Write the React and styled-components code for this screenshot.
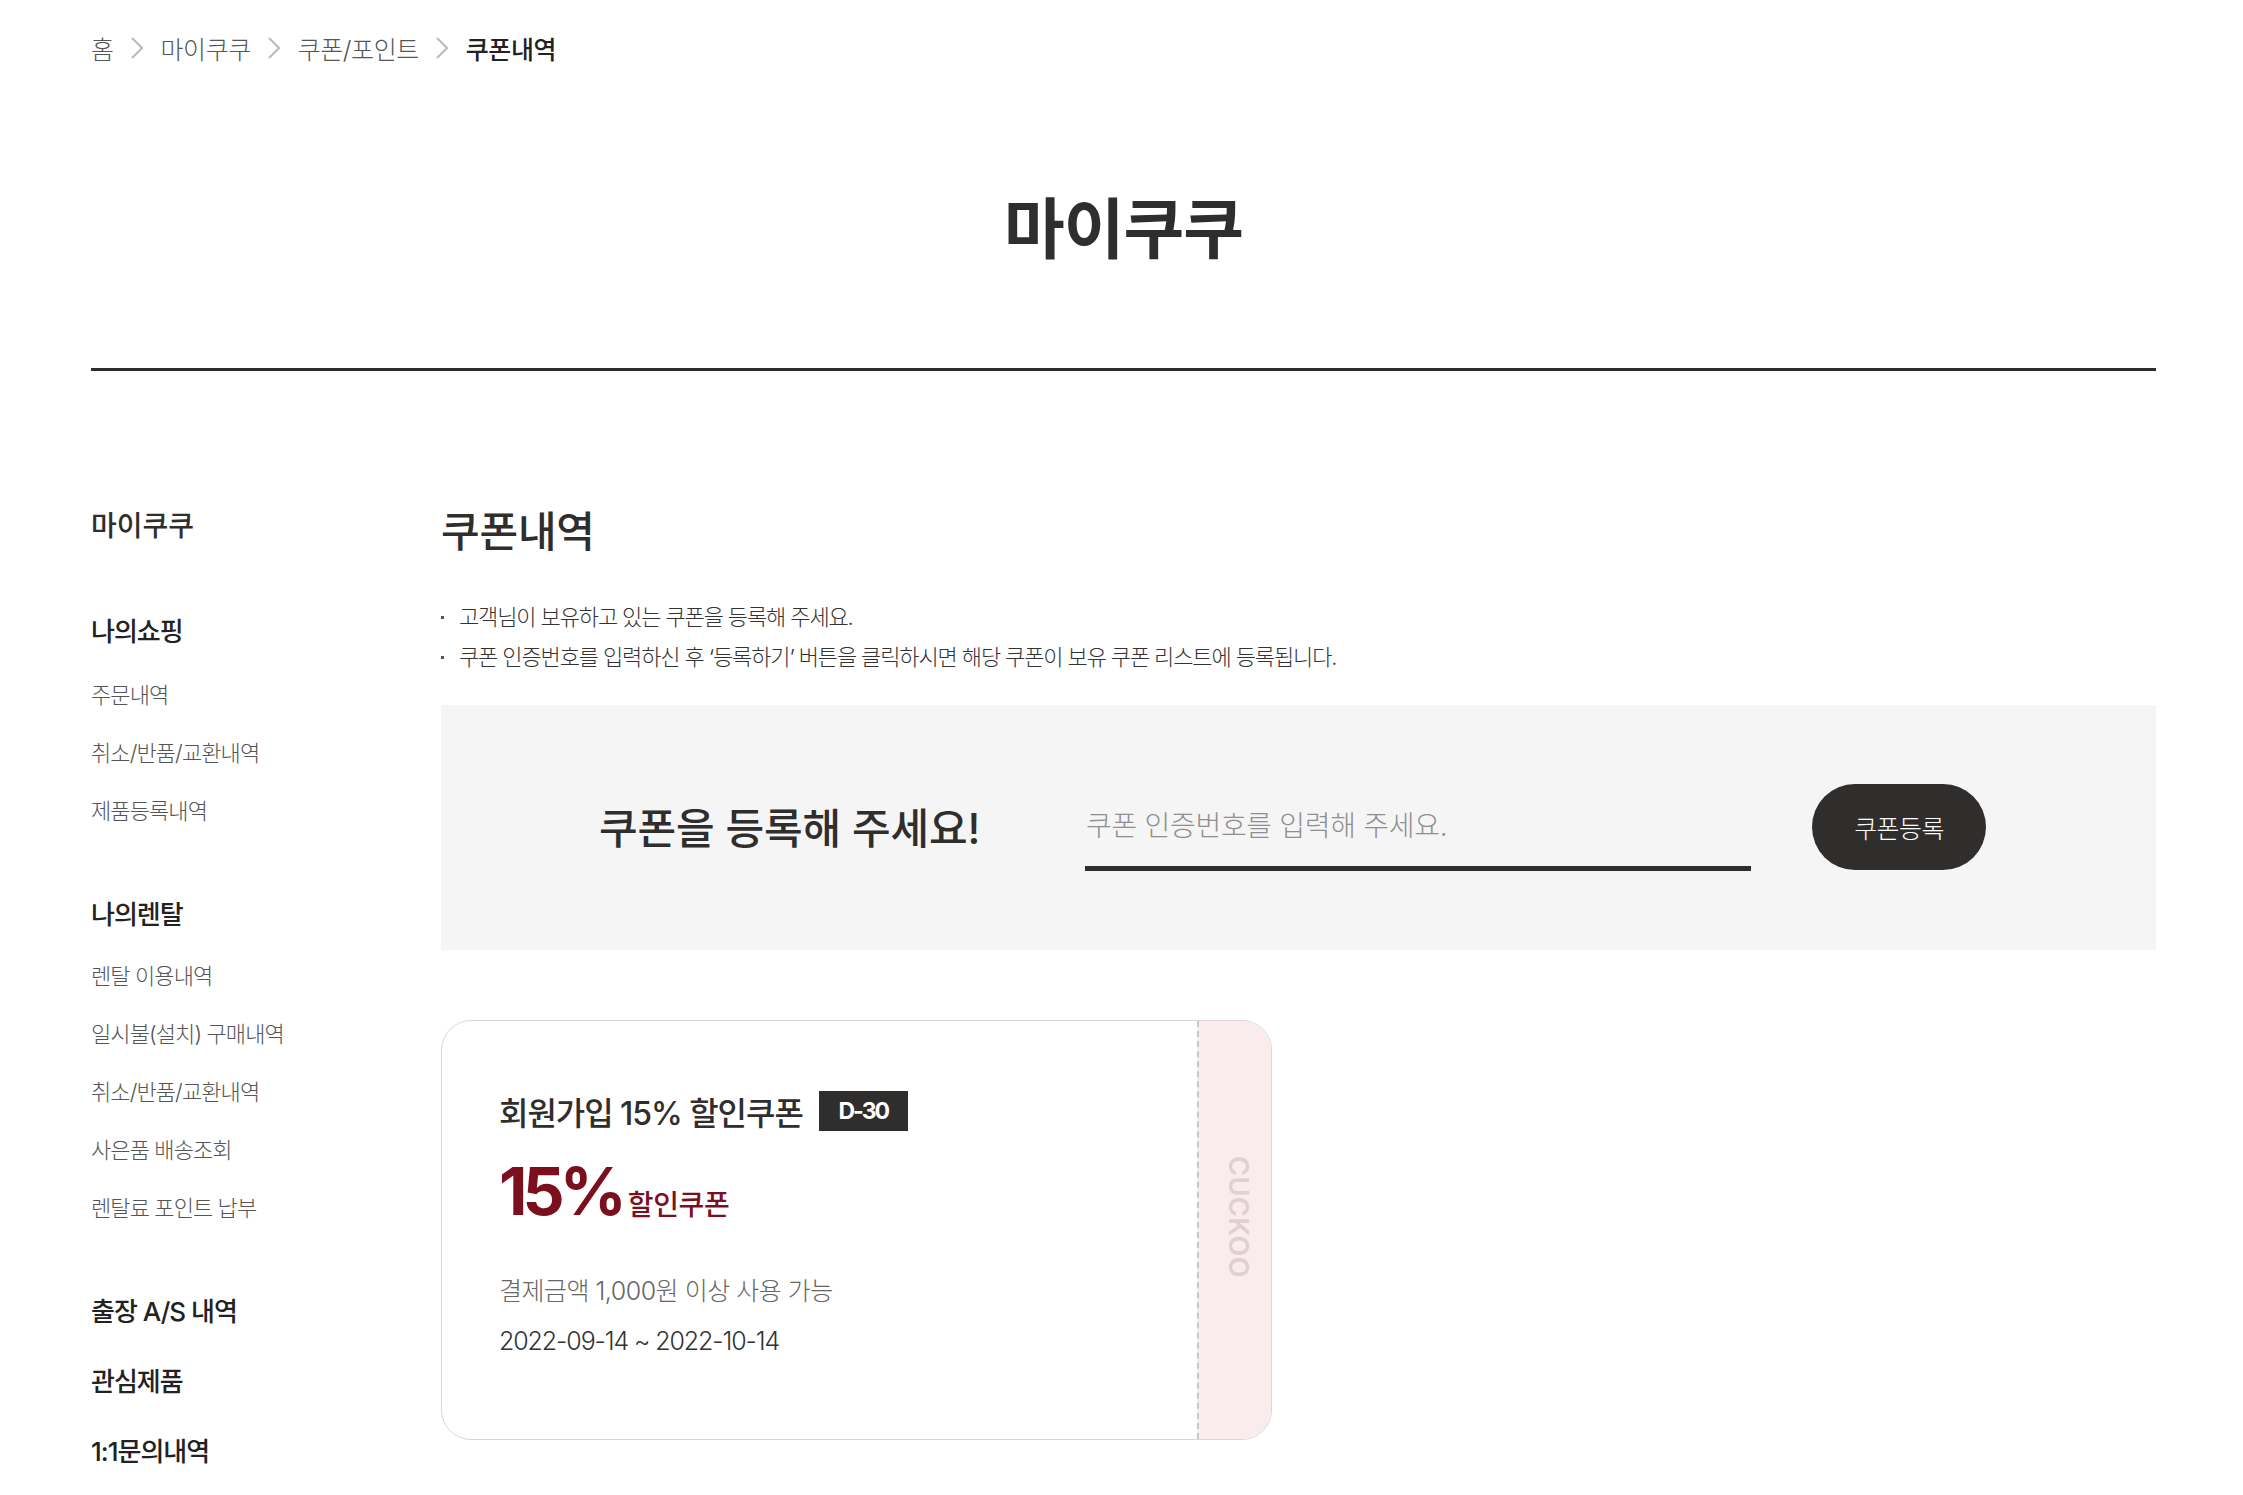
import React from 'react';
import styled, { createGlobalStyle } from 'styled-components';

const GlobalStyle = createGlobalStyle`
	html, body {
		margin: 0;
		padding: 0;
		background: #fff;
		font-family: Inter, "Noto Sans CJK KR", sans-serif;
		color: #2f2e2c;
	}
	* {
		box-sizing: border-box;
	}
`;

const Page = styled.div`
	padding: 0 87px 0 91px;
	height: 1495px;
	overflow: hidden;
`;

const Breadcrumb = styled.nav`
	display: flex;
	align-items: center;
	height: 96px;
	font-size: 25px;
	font-weight: 300;
	letter-spacing: -0.45px;
	color: #555;
`;

const Crumb = styled.span`
	color: ${props => (props.current ? '#222' : '#555')};
	font-weight: ${props => (props.current ? 500 : 300)};
`;

const Chevron = styled.svg`
	width: 12px;
	height: 22px;
	margin: 0 18px 0 17px;
	fill: none;
	stroke: #bbb;
	stroke-width: 2px;
`;

const PageTitle = styled.h1`
	margin: 0;
	height: 275px;
	padding-top: 87px;
	border-bottom: 3px solid #2f2e2c;
	text-align: center;
	font-size: 66px;
	line-height: 92px;
	font-weight: 700;
	letter-spacing: -1px;
`;

const Columns = styled.div`
	display: flex;
	align-items: flex-start;
	padding-top: 135px;
`;

const Sidebar = styled.aside`
	width: 350px;
	flex: none;
`;

const SideTitle = styled.div`
	font-size: 28px;
	line-height: 40px;
	font-weight: 500;
	letter-spacing: 0;
	margin-bottom: 68px;
`;

const SideGroup = styled.div`
	margin-bottom: ${props => props.gap || 0}px;
`;

const SideHead = styled.div`
	font-size: 26px;
	line-height: 36px;
	font-weight: 500;
	letter-spacing: -1px;
	color: #222;
	margin-bottom: ${props => props.gap || 0}px;
`;

const SideItem = styled.div`
	font-size: 22px;
	line-height: 32px;
	font-weight: 300;
	letter-spacing: -0.9px;
	color: #555;
	margin-bottom: 26px;
`;

const Content = styled.main`
	flex: 1;
	min-width: 0;
`;

const SectionTitle = styled.h2`
	margin: -4px 0 35px;
	font-size: 42px;
	line-height: 60px;
	font-weight: 500;
	letter-spacing: -0.2px;
`;

const Notes = styled.ul`
	margin: 0 0 28px;
	padding: 0;
	list-style: none;
`;

const Note = styled.li`
	position: relative;
	padding-left: 18px;
	font-size: 22px;
	line-height: 40px;
	font-weight: 300;
	letter-spacing: -1.12px;
	color: #333;

	&::before {
		content: '';
		position: absolute;
		left: 0;
		top: 19px;
		width: 3px;
		height: 3px;
		background: #555;
	}
`;

const RegisterBox = styled.section`
	display: flex;
	align-items: center;
	height: 245px;
	padding-left: 158px;
	background: #f5f5f5;
`;

const RegisterTitle = styled.div`
	width: 486px;
	flex: none;
	padding-bottom: 4px;
	font-size: 42px;
	font-weight: 500;
	letter-spacing: -0.15px;
	color: #2f2e2c;
`;

const CodeInput = styled.input`
	width: 666px;
	height: 87px;
	padding: 2px 0 0 1px;
	border: 0;
	border-bottom: 5px solid #2f2e2c;
	background: transparent;
	outline: 0;
	font-family: inherit;
	font-size: 28px;
	font-weight: 300;
	letter-spacing: -0.3px;

	&::placeholder {
		color: #8f8f8f;
		opacity: 1;
	}
`;

const RegisterButton = styled.button`
	width: 174px;
	height: 86px;
	margin: 0 0 2px 61px;
	border: 0;
	border-radius: 43px;
	background: #2f2e2c;
	color: #fff;
	font-family: inherit;
	font-size: 25px;
	font-weight: 300;
	letter-spacing: -0.6px;
`;

const Card = styled.article`
	display: flex;
	width: 831px;
	height: 420px;
	margin-top: 70px;
	border: 1px solid #d8d8d8;
	border-radius: 30px;
	overflow: hidden;
`;

const CardBody = styled.div`
	flex: 1;
	padding: 70px 0 0 57px;
`;

const CardTitleRow = styled.div`
	display: flex;
	align-items: center;
	height: 40px;
`;

const CardTitle = styled.span`
	font-size: 32px;
	font-weight: 500;
	letter-spacing: -1.05px;
	color: #2f2e2c;
`;

const Badge = styled.span`
	display: flex;
	align-items: center;
	justify-content: center;
	width: 89px;
	height: 40px;
	margin-left: 16px;
	background: #2f2e2c;
	color: #fff;
	font-size: 23px;
	font-weight: 700;
	letter-spacing: -2px;
`;

const DiscountRow = styled.div`
	display: flex;
	align-items: baseline;
	margin-top: 25px;
	height: 70px;
	color: #7b0f1e;
`;

const DiscountValue = styled.strong`
	font-size: 66px;
	line-height: 70px;
	font-weight: 700;
	letter-spacing: -5px;
`;

const DiscountLabel = styled.span`
	margin-left: 6px;
	font-size: 28px;
	font-weight: 500;
	letter-spacing: -0.3px;
`;

const CardLine = styled.div`
	font-size: 25px;
	line-height: 50px;
	font-weight: 300;
	letter-spacing: ${props => props.spacing}px;
	color: ${props => props.color};
	margin-top: ${props => props.gap || 0}px;
`;

const Stub = styled.div`
	display: flex;
	align-items: center;
	justify-content: center;
	width: 74px;
	flex: none;
	padding: 0 0 26px 6px;
	border-left: 2px dashed #c8c8c8;
	background: #faebec;
`;

const StubLogo = styled.span`
	writing-mode: vertical-rl;
	font-size: 27px;
	font-weight: 600;
	letter-spacing: 0.5px;
	color: #e0d0d3;
`;

const Separator = () => (
	<Chevron viewBox="0 0 12 22">
		<polyline points="1 1 11 11 1 21" />
	</Chevron>
);

const App = () => (
	<Page>
		<GlobalStyle />
		<Breadcrumb>
			<Crumb>홈</Crumb>
			<Separator />
			<Crumb>마이쿠쿠</Crumb>
			<Separator />
			<Crumb>쿠폰/포인트</Crumb>
			<Separator />
			<Crumb current>쿠폰내역</Crumb>
		</Breadcrumb>
		<PageTitle>마이쿠쿠</PageTitle>
		<Columns>
			<Sidebar>
				<SideTitle>마이쿠쿠</SideTitle>
				<SideGroup gap={70}>
					<SideHead gap={29}>나의쇼핑</SideHead>
					<SideItem>주문내역</SideItem>
					<SideItem>취소/반품/교환내역</SideItem>
					<SideItem>제품등록내역</SideItem>
				</SideGroup>
				<SideGroup gap={70}>
					<SideHead gap={27}>나의렌탈</SideHead>
					<SideItem>렌탈 이용내역</SideItem>
					<SideItem>일시불(설치) 구매내역</SideItem>
					<SideItem>취소/반품/교환내역</SideItem>
					<SideItem>사은품 배송조회</SideItem>
					<SideItem>렌탈료 포인트 납부</SideItem>
				</SideGroup>
				<SideHead gap={34}>출장 A/S 내역</SideHead>
				<SideHead gap={34}>관심제품</SideHead>
				<SideHead>1:1문의내역</SideHead>
			</Sidebar>
			<Content>
				<SectionTitle>쿠폰내역</SectionTitle>
				<Notes>
					<Note>고객님이 보유하고 있는 쿠폰을 등록해 주세요.</Note>
					<Note>쿠폰 인증번호를 입력하신 후 ‘등록하기’ 버튼을 클릭하시면 해당 쿠폰이 보유 쿠폰 리스트에 등록됩니다.</Note>
				</Notes>
				<RegisterBox>
					<RegisterTitle>쿠폰을 등록해 주세요!</RegisterTitle>
					<CodeInput placeholder="쿠폰 인증번호를 입력해 주세요." />
					<RegisterButton>쿠폰등록</RegisterButton>
				</RegisterBox>
				<Card>
					<CardBody>
						<CardTitleRow>
							<CardTitle>회원가입 15% 할인쿠폰</CardTitle>
							<Badge>D-30</Badge>
						</CardTitleRow>
						<DiscountRow>
							<DiscountValue>15%</DiscountValue>
							<DiscountLabel>할인쿠폰</DiscountLabel>
						</DiscountRow>
						<CardLine color="#666" spacing={-0.5} gap={40}>결제금액 1,000원 이상 사용 가능</CardLine>
						<CardLine color="#333" spacing={-1.1}>2022-09-14 ~ 2022-10-14</CardLine>
					</CardBody>
					<Stub>
						<StubLogo>CUCKOO</StubLogo>
					</Stub>
				</Card>
			</Content>
		</Columns>
	</Page>
);

export default App;
